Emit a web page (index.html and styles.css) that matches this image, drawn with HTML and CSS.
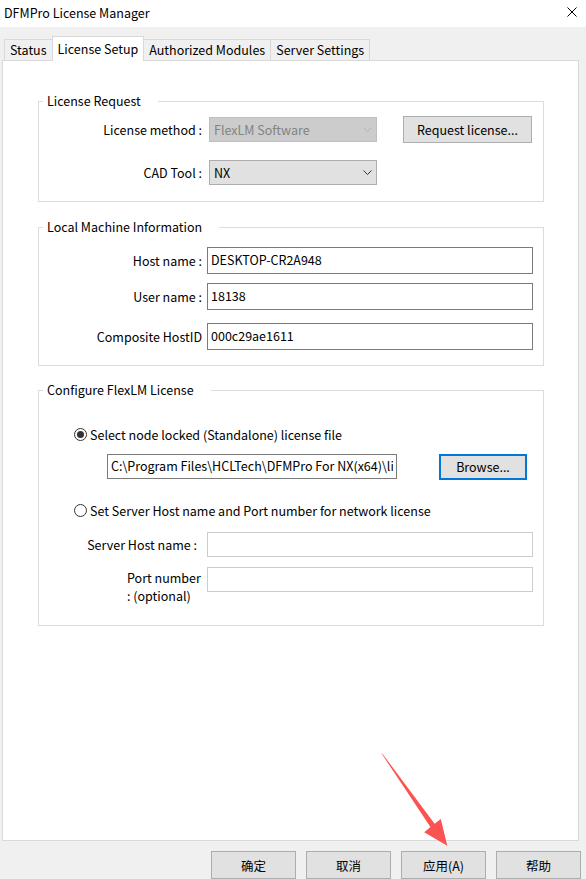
FILE: index.html
```html
<!DOCTYPE html>
<html lang="en">

<head>
    <meta charset="UTF-8">
    <meta name="viewport" content="width=device-width, initial-scale=1.0" />
    <title>DFMPro License Manager</title>
    <link rel="stylesheet" href="styles.css">
</head>

<body>
    <div class="window">
        <!-- Title bar -->
        <div class="titlebar">
            <span class="title">DFMPro License Manager</span>
            <svg class="close" width="10" height="10" viewBox="0 0 10 10">
                <path d="M0.5 0.5 L9.5 9.5 M9.5 0.5 L0.5 9.5" stroke="#000" stroke-width="1" fill="none" />
            </svg>
        </div>

        <!-- Tabs -->
        <div class="tabs">
            <div class="tab">Status</div>
            <div class="tab active">License Setup</div>
            <div class="tab">Authorized Modules</div>
            <div class="tab">Server Settings</div>
        </div>

        <!-- License Setup page -->
        <div class="panel">
            <fieldset class="group group-request">
                <legend>License Request</legend>
                <div class="row row-method">
                    <label class="label">License method :</label>
                    <div class="select disabled">
                        <span>FlexLM Software</span>
                        <svg class="chevron" width="9" height="5" viewBox="0 0 9 5">
                            <path d="M0.5 0.5 L4.5 4.5 L8.5 0.5" stroke="#b4b4b4" fill="none" />
                        </svg>
                    </div>
                    <button class="btn btn-request">Request license...</button>
                </div>
                <div class="row row-cad">
                    <label class="label">CAD Tool :</label>
                    <div class="select">
                        <span>NX</span>
                        <svg class="chevron" width="9" height="5" viewBox="0 0 9 5">
                            <path d="M0.5 0.5 L4.5 4.5 L8.5 0.5" stroke="#333" fill="none" />
                        </svg>
                    </div>
                </div>
            </fieldset>

            <fieldset class="group group-machine">
                <legend>Local Machine Information</legend>
                <div class="row row-host">
                    <label class="label">Host name :</label>
                    <input class="field" type="text" value="DESKTOP-CR2A948" />
                </div>
                <div class="row row-user">
                    <label class="label">User name :</label>
                    <input class="field" type="text" value="18138" />
                </div>
                <div class="row row-hostid">
                    <label class="label">Composite HostID</label>
                    <input class="field" type="text" value="000c29ae1611" />
                </div>
            </fieldset>

            <fieldset class="group group-flexlm">
                <legend>Configure FlexLM License</legend>
                <div class="radio-row first">
                    <span class="radio checked"></span>
                    <span>Select node locked (Standalone) license file</span>
                </div>
                <div class="row row-file">
                    <input class="field file-path" type="text" value="C:\Program Files\HCLTech\DFMPro For NX(x64)\license\license.dat" />
                    <button class="btn btn-browse">Browse...</button>
                </div>
                <div class="radio-row second">
                    <span class="radio"></span>
                    <span>Set Server Host name and Port number for network license</span>
                </div>
                <div class="row row-server">
                    <label class="label">Server Host name :</label>
                    <input class="field off" type="text" value="" />
                </div>
                <div class="row row-port">
                    <label class="label label-port">Port number<br>: (optional)</label>
                    <input class="field off" type="text" value="" />
                </div>
            </fieldset>
        </div>

        <!-- Dialog buttons -->
        <div class="footer">
            <button class="btn btn-dialog">确定</button>
            <button class="btn btn-dialog">取消</button>
            <button class="btn btn-dialog">应用(A)</button>
            <button class="btn btn-dialog">帮助</button>
        </div>

        <!-- red pointer towards Apply -->
        <svg class="pointer" width="586" height="879" viewBox="0 0 586 879">
            <path d="M381.6 753.6 Q382.4 753.4 382.8 754.2 L434.6 823.8 L440.8 819 L447.3 845.8 L424.2 832.3 L430.4 826.9 Z" fill="#fb5252" />
        </svg>
    </div>
</body>

</html>
```

FILE: styles.css
```css
/* Reset some basic styles */
* {
    margin: 0;
    padding: 0;
    box-sizing: border-box;
}

body {
    font-family: "Noto Sans CJK SC", "Noto Sans", sans-serif;
    font-size: 12.5px;
    color: #000;
    background-color: #f0f0f0;
}

.window {
    position: relative;
    width: 586px;
    height: 879px;
    overflow: hidden;
    background-color: #f0f0f0;
}

/* Title bar */
.titlebar {
    display: flex;
    justify-content: space-between;
    align-items: center;
    height: 27px;
    padding: 0 9px 3px 4px;
    background-color: #fff;
}

/* Tabs */
.tabs {
    display: flex;
    align-items: flex-end;
    height: 33px;
    padding-left: 4px;
}

.tab {
    display: flex;
    align-items: center;
    height: 21px;
    padding: 0 5px 1px;
    margin-left: -1px;
    border: 1px solid #d9d9d9;
    border-bottom: none;
    background-color: #f0f0f0;
}

.tab:first-child {
    margin-left: 0;
}

.tab.active {
    position: relative;
    z-index: 1;
    height: 25px;
    margin-bottom: -1px;
    padding: 0 5px 2px;
    background-color: #fff;
}

/* Tab page */
.panel {
    height: 781px;
    margin: 0 7px 0 2px;
    padding: 32px 34px 0 35px;
    background-color: #fff;
    border: 1px solid #d9d9d9;
}

/* Group boxes */
.group {
    border: 1px solid #dcdcdc;
    padding: 0;
    margin: 0;
}

.group legend {
    margin-left: 4px;
    padding: 0 17px 0 4px;
    line-height: 16px;
}

.group-request {
    padding: 7px 0 16px;
}

.group-machine {
    margin-top: 17px;
    padding: 12px 0 15px;
}

.group-flexlm {
    margin-top: 16px;
    padding: 27px 0 20px;
}

.row {
    display: flex;
    align-items: center;
}

.label {
    flex: none;
    width: 163px;
    text-align: right;
    white-space: nowrap;
}

/* License request rows */
.row-method {
    height: 27px;
}

.row-method .select {
    margin-left: 7px;
}

.row-cad {
    height: 25px;
    margin-top: 17px;
}

.row-cad .select {
    margin-left: 7px;
    height: 25px;
}

.select {
    display: flex;
    justify-content: space-between;
    align-items: center;
    width: 168px;
    height: 25px;
    padding: 0 4px 1px 4px;
    background-color: #e1e1e1;
    border: 1px solid #adadad;
}

.select.disabled {
    background-color: #cccccc;
    border-color: #bfbfbf;
    color: #838383;
}

.btn {
    font-family: inherit;
    font-size: inherit;
    color: #000;
    background-color: #e1e1e1;
    border: 1px solid #adadad;
    cursor: pointer;
}

.btn-request {
    width: 129px;
    height: 27px;
    margin-left: 26px;
}

/* Text boxes */
.field {
    font-family: inherit;
    font-size: inherit;
    color: #000;
    width: 326px;
    height: 27px;
    padding: 0 3px 3px;
    border: 1px solid #7a7a7a;
    background-color: #fff;
    outline: none;
}

.field.off {
    height: 25px;
    border-color: #cccccc;
}

.group-machine .field {
    margin-left: 5px;
}

.row-user {
    margin-top: 9px;
}

.row-hostid {
    margin-top: 13px;
}

/* FlexLM rows */
.radio-row {
    display: flex;
    align-items: center;
    height: 18px;
    margin-left: 35px;
}

.radio-row.second {
    margin-top: 21px;
}

.radio {
    position: relative;
    width: 13px;
    height: 13px;
    margin-right: 3px;
    border: 1px solid #333;
    border-radius: 50%;
    background-color: #fff;
}

.radio.checked::after {
    content: "";
    position: absolute;
    top: 2px;
    left: 2px;
    width: 7px;
    height: 7px;
    border-radius: 50%;
    background-color: #333;
}

.row-file {
    height: 27px;
    margin-top: 10px;
}

.file-path {
    width: 290px;
    height: 25px;
    margin-left: 68px;
}

.btn-browse {
    width: 88px;
    height: 26px;
    margin-left: 42px;
    border: 2px solid #0078d7;
}

.row-server {
    margin-top: 13px;
}

.row-server .label,
.row-port .label {
    width: 158px;
}

.row-server .field,
.row-port .field {
    margin-left: 10px;
}

.row-port {
    align-items: flex-start;
    margin-top: 10px;
}

.label-port {
    margin-top: 2px;
    padding-left: 88px;
    text-align: left;
    line-height: 18px;
}

/* Dialog buttons */
.footer {
    display: flex;
    justify-content: flex-end;
    gap: 10px;
    padding: 10px 5px 0 0;
}

.btn-dialog {
    width: 85px;
    height: 28px;
}

/* annotation arrow */
.pointer {
    position: absolute;
    top: 0;
    left: 0;
    pointer-events: none;
}
```
